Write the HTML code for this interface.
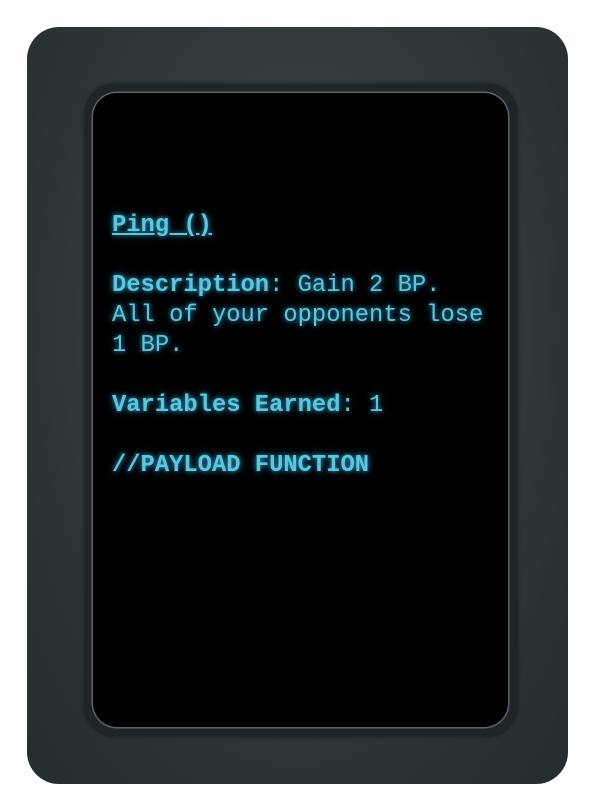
<!DOCTYPE html>
<html><head><style>
html,body{margin:0;padding:0;background:#fff;width:595px;height:811px;overflow:hidden}
.card{position:absolute;left:27px;top:27px;width:541px;height:757px;border-radius:32px;
background:radial-gradient(ellipse at 50% 40%,#3a4345 0%,#2f3739 60%,#252c2e 100%);}
.bezel{position:absolute;left:85px;top:84px;width:432px;height:652px;border-radius:30px;background:#1f2526;box-shadow:0 0 4px rgba(0,0,0,.6)}
.screen{position:absolute;left:93px;top:93px;width:415px;height:634px;border-radius:24px;background:#000;box-shadow:0 0 0 1.5px #5a6466}
.txt{position:absolute;left:112px;top:211px;font-family:"Liberation Mono",monospace;font-size:23.8px;line-height:30px;color:#58c8e0;text-shadow:0 0 5px rgba(60,180,220,.8),0 0 10px rgba(40,150,200,.5);white-space:pre}
b{font-weight:bold}
</style></head><body>
<div class="card"></div>
<div class="bezel"></div>
<div class="screen"></div>
<div class="txt"><b style="text-decoration:underline">Ping ()</b>

<b>Description</b>: Gain 2 BP.
All of your opponents lose
1 BP.

<b>Variables Earned</b>: 1

<b>//PAYLOAD FUNCTION</b></div>
</body></html>
